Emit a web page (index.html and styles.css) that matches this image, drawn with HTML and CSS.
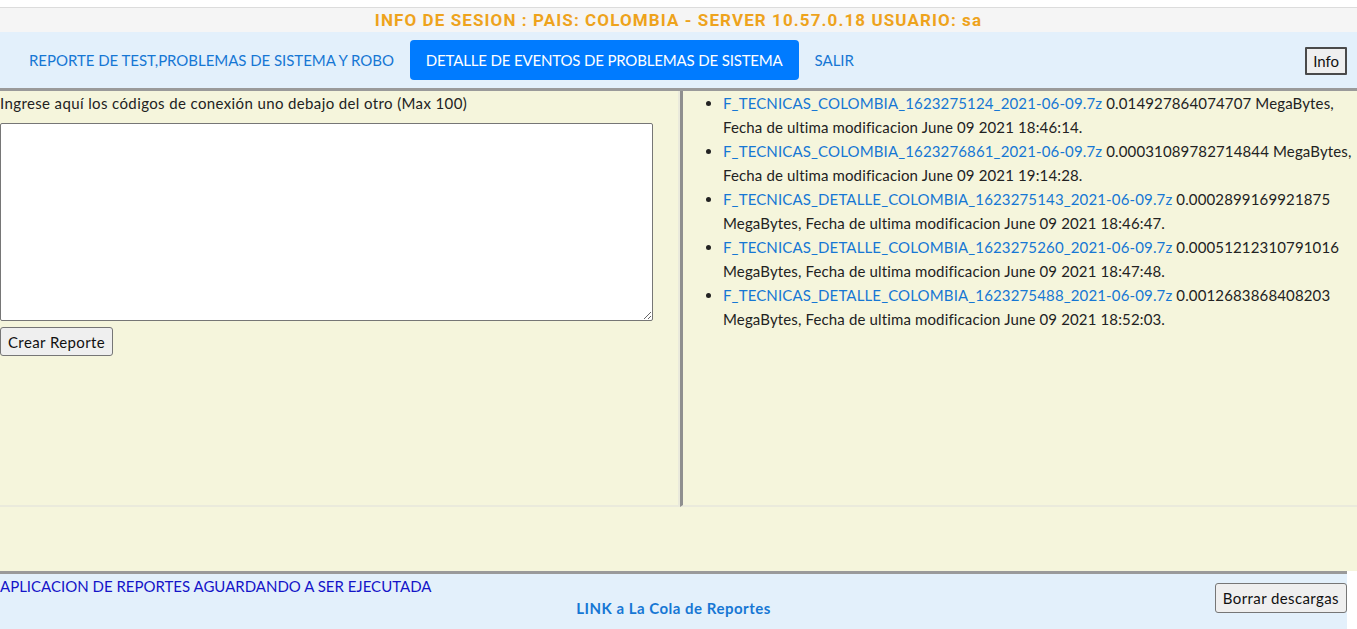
FILE: index.html
```html
<!DOCTYPE html>
<html lang="es">
<head>
<meta charset="utf-8">
<title>Reportes</title>
<link rel="stylesheet" href="styles.css">
</head>
<body>
<div class="topgap"></div>
<div class="session">INFO DE SESION : PAIS: COLOMBIA - SERVER 10.57.0.18 USUARIO: sa</div>
<nav class="nav">
  <a class="nav-link" href="#">REPORTE DE TEST,PROBLEMAS DE SISTEMA Y ROBO</a>
  <a class="nav-link active" href="#">DETALLE DE EVENTOS DE PROBLEMAS DE SISTEMA</a>
  <a class="nav-link" href="#">SALIR</a>
  <span class="spacer"></span>
  <button class="info-btn">Info</button>
</nav>
<main class="main">
  <div class="panels">
    <section class="left">
      <label class="label">Ingrese aquí los códigos de conexión uno debajo del otro (Max 100)</label>
      <textarea class="codes"></textarea>
      <button class="btn">Crear Reporte</button>
    </section>
    <section class="right">
      <ul class="files">
        <li><a href="#">F_TECNICAS_COLOMBIA_1623275124_2021-06-09.7z</a> 0.014927864074707 MegaBytes, Fecha de ultima modificacion June 09 2021 18:46:14.</li>
        <li><a href="#">F_TECNICAS_COLOMBIA_1623276861_2021-06-09.7z</a> 0.00031089782714844 MegaBytes, Fecha de ultima modificacion June 09 2021 19:14:28.</li>
        <li><a href="#">F_TECNICAS_DETALLE_COLOMBIA_1623275143_2021-06-09.7z</a> 0.0002899169921875 MegaBytes, Fecha de ultima modificacion June 09 2021 18:46:47.</li>
        <li><a href="#">F_TECNICAS_DETALLE_COLOMBIA_1623275260_2021-06-09.7z</a> 0.00051212310791016 MegaBytes, Fecha de ultima modificacion June 09 2021 18:47:48.</li>
        <li><a href="#">F_TECNICAS_DETALLE_COLOMBIA_1623275488_2021-06-09.7z</a> 0.0012683868408203 MegaBytes, Fecha de ultima modificacion June 09 2021 18:52:03.</li>
      </ul>
    </section>
  </div>
</main>
<footer class="footer">
  <div class="status">APLICACION DE REPORTES AGUARDANDO A SER EJECUTADA</div>
  <div class="queue"><a href="#">LINK a La Cola de Reportes</a></div>
  <button class="btn btn-right">Borrar descargas</button>
</footer>
</body>
</html>
```
FILE: styles.css
```css
* { box-sizing: border-box; }
html, body { margin: 0; padding: 0; background: #ffffff; }
body {
  font-family: Lato, "Noto Sans", sans-serif;
  font-size: 15px;
  line-height: 24px;
  color: #222;
  width: 1357px;
  overflow: hidden;
}
a { text-decoration: none; color: #1677d4; }

.topgap { height: 7px; }
.session {
  border-top: 1px solid #dcdcdc;
  background: #f5f5f5;
  height: 25px;
  line-height: 24px;
  text-align: center;
  font-family: Roboto, "Liberation Sans", sans-serif;
  font-weight: 700;
  font-size: 17px;
  letter-spacing: 1.1px;
  color: #eea31c;
}

.nav {
  display: flex;
  align-items: center;
  height: 56px;
  padding: 0 10px 0 13px;
  background: #e3f0fb;
}
.nav-link {
  display: block;
  padding: 8px 16px;
  line-height: 24px;
  border-radius: 4px;
  color: #1677d4;
  letter-spacing: -0.04px;
}
.nav-link.active { background: #007bff; color: #fff; letter-spacing: -0.16px; }
.spacer { flex: 1; }
.info-btn {
  font: inherit;
  font-size: 15px;
  line-height: 20px;
  height: 28px;
  padding: 0 6px;
  background: #efefef;
  border: 2px solid #4a4a4a;
  border-radius: 1px;
  color: #111;
  margin-top: 2px;
}

.main {
  background: #f5f5dc;
  border-top: 3px solid #9a9a9a;
  padding-bottom: 64px;
}
.panels {
  display: flex;
  height: 416px;
}
.left {
  width: 680px;
  border-right: 2px solid #eaeadc;
  border-bottom: 2px solid #eaeadc;
}
.label { display: block; letter-spacing: 0.38px; }
.codes {
  display: block;
  width: 653px;
  height: 198px;
  margin: 8px 0 6px;
  border: 1px solid #767676;
  border-radius: 2px;
  background: #fff;
  resize: both;
}
.btn {
  font: inherit;
  font-size: 15px;
  line-height: 20px;
  height: 29px;
  padding: 0 7px;
  letter-spacing: 0.4px;
  background: #efefef;
  border: 1px solid #767676;
  border-radius: 3px;
  color: #111;
}
.right {
  flex: 1;
  border-left: 3px solid #8f8f8f;
  border-bottom: 2px solid #eaeadc;
}
.files {
  margin: 0;
  padding: 0 0 0 40px;
  list-style: disc;
  letter-spacing: 0.14px;
}

.footer {
  width: 1347px;
  height: 58px;
  background: #e3f0fb;
  border-top: 3px solid #9a9a9a;
  display: grid;
  grid-template-columns: 1fr;
  grid-template-rows: 24px 24px;
}
.status { grid-row: 1; grid-column: 1; color: #1414c8; line-height: 24px; }
.queue {
  grid-row: 2;
  grid-column: 1;
  text-align: center;
  line-height: 20px;
  font-weight: 700;
  letter-spacing: 0.5px;
}
.queue a { color: #1677d4; }
.btn-right {
  grid-row: 1 / span 2;
  grid-column: 1;
  justify-self: end;
  align-self: start;
  margin-top: 9px;
  height: 30px;
}
```
